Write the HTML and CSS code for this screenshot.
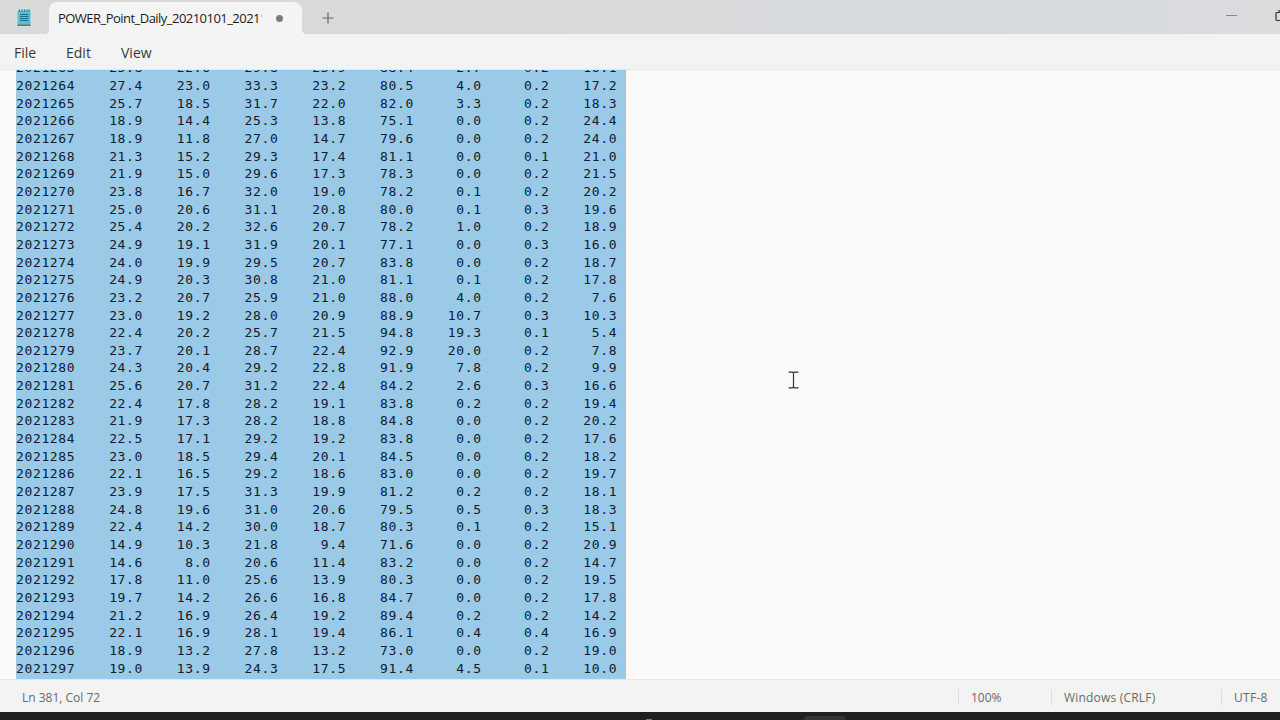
FILE: index.html
```html
<!DOCTYPE html>
<html lang="en">
<head>
  <meta charset="UTF-8" />
  <title>Notepad</title>
  <link rel="stylesheet" href="styles.css">
</head>
<body>
  <div class="window">
    <div class="titlebar">
      <svg class="app-icon" width="14" height="18" viewBox="0 0 14 18">
        <rect x="0.5" y="15" width="13" height="2" fill="#8d6a42"/>
        <rect x="0.5" y="1.500" width="13" height="14" rx="1" fill="#4fc4d9"/>
        <path d="M2.500 .5v2M5 .5v2M7.500 .5v2M10 .5v2M12 .5v2" stroke="#2a6b7c" stroke-width="1"/>
        <path d="M3 5.500h8.500M3 7.500h8.500M3 9.500h8.500M3 11.500h8.500" stroke="#1c7287" stroke-width="1"/>
      </svg>
      <div class="tab">
        <span class="tab-title">POWER_Point_Daily_20210101_20211231</span>
        <span class="unsaved"></span>
      </div>
      <svg class="new-tab" width="12" height="12" viewBox="0 0 12 12">
        <path d="M6 .5v11M.5 6h11" stroke="#666" stroke-width="1.200"/>
      </svg>
      <div class="controls">
        <span class="minimize"></span>
        <svg class="restore" width="5" height="12" viewBox="0 0 5 12">
          <path d="M5 2.500H2Q1 2.500 1 3.500V9.500Q1 10.500 2 10.500H5M3 .8H5" fill="none" stroke="#333" stroke-width="1.200"/>
        </svg>
      </div>
    </div>

    <div class="menubar">
      <span class="file">File</span>
      <span class="edit">Edit</span>
      <span class="view">View</span>
    </div>

    <div class="editor">
<pre class="selection">
2021263    25.8    22.6    29.8    23.9    88.4     2.7     0.2    16.1
2021264    27.4    23.0    33.3    23.2    80.5     4.0     0.2    17.2
2021265    25.7    18.5    31.7    22.0    82.0     3.3     0.2    18.3
2021266    18.9    14.4    25.3    13.8    75.1     0.0     0.2    24.4
2021267    18.9    11.8    27.0    14.7    79.6     0.0     0.2    24.0
2021268    21.3    15.2    29.3    17.4    81.1     0.0     0.1    21.0
2021269    21.9    15.0    29.6    17.3    78.3     0.0     0.2    21.5
2021270    23.8    16.7    32.0    19.0    78.2     0.1     0.2    20.2
2021271    25.0    20.6    31.1    20.8    80.0     0.1     0.3    19.6
2021272    25.4    20.2    32.6    20.7    78.2     1.0     0.2    18.9
2021273    24.9    19.1    31.9    20.1    77.1     0.0     0.3    16.0
2021274    24.0    19.9    29.5    20.7    83.8     0.0     0.2    18.7
2021275    24.9    20.3    30.8    21.0    81.1     0.1     0.2    17.8
2021276    23.2    20.7    25.9    21.0    88.0     4.0     0.2     7.6
2021277    23.0    19.2    28.0    20.9    88.9    10.7     0.3    10.3
2021278    22.4    20.2    25.7    21.5    94.8    19.3     0.1     5.4
2021279    23.7    20.1    28.7    22.4    92.9    20.0     0.2     7.8
2021280    24.3    20.4    29.2    22.8    91.9     7.8     0.2     9.9
2021281    25.6    20.7    31.2    22.4    84.2     2.6     0.3    16.6
2021282    22.4    17.8    28.2    19.1    83.8     0.2     0.2    19.4
2021283    21.9    17.3    28.2    18.8    84.8     0.0     0.2    20.2
2021284    22.5    17.1    29.2    19.2    83.8     0.0     0.2    17.6
2021285    23.0    18.5    29.4    20.1    84.5     0.0     0.2    18.2
2021286    22.1    16.5    29.2    18.6    83.0     0.0     0.2    19.7
2021287    23.9    17.5    31.3    19.9    81.2     0.2     0.2    18.1
2021288    24.8    19.6    31.0    20.6    79.5     0.5     0.3    18.3
2021289    22.4    14.2    30.0    18.7    80.3     0.1     0.2    15.1
2021290    14.9    10.3    21.8     9.4    71.6     0.0     0.2    20.9
2021291    14.6     8.0    20.6    11.4    83.2     0.0     0.2    14.7
2021292    17.8    11.0    25.6    13.9    80.3     0.0     0.2    19.5
2021293    19.7    14.2    26.6    16.8    84.7     0.0     0.2    17.8
2021294    21.2    16.9    26.4    19.2    89.4     0.2     0.2    14.2
2021295    22.1    16.9    28.1    19.4    86.1     0.4     0.4    16.9
2021296    18.9    13.2    27.8    13.2    73.0     0.0     0.2    19.0
2021297    19.0    13.9    24.3    17.5    91.4     4.5     0.1    10.0
</pre>
      <svg class="cursor" width="11" height="18" viewBox="0 0 11 18">
        <path d="M.5 1.200h4L5.500 2l1-.8h4M.5 16.800h4l1-.8 1 .8h4M5.500 2v14" fill="none" stroke="#333" stroke-width="1.200"/>
      </svg>
    </div>

    <div class="statusbar">
      <span class="position">Ln 381, Col 72</span>
      <span class="cell zoom">100%</span>
      <span class="cell eol">Windows (CRLF)</span>
      <span class="cell encoding">UTF-8</span>
    </div>
  </div>
  <div class="taskbar">
    <span class="taskbar-icon"></span>
    <span class="taskbar-app"></span>
  </div>
</body>
</html>
```
FILE: styles.css
```css
html, body {
  margin: 0;
  padding: 0;
  height: 100vh;
  overflow: hidden;
}
body {
  display: flex;
  flex-direction: column;
  background-color: #202020;
  font-family: 'Open Sans', 'Noto Sans', sans-serif;
  color: #3a3a3a;
}
.window {
  height: 712px;
  display: flex;
  flex-direction: column;
  background-color: #f3f3f3;
}
.titlebar {
  height: 34px;
  display: flex;
  align-items: center;
  background: linear-gradient(90deg, #d9d9d9 0, #d9d9d9 30%, #d6dadd 75%, #dadcde 100%);
}
.app-icon {
  margin-left: 17px;
  margin-top: 2px;
}
.tab {
  position: relative;
  width: 253px;
  height: 32px;
  margin-left: 18px;
  margin-top: 2px;
  box-sizing: border-box;
  padding-left: 9px;
  display: flex;
  align-items: center;
  border-radius: 8px 8px 0 0;
  background-color: #f4f4f4;
}
/* flared bottom corners of the active tab */
.tab::before,
.tab::after {
  content: '';
  position: absolute;
  bottom: 0;
  width: 4px;
  height: 4px;
}
.tab::before {
  left: -4px;
  background: radial-gradient(circle at 0 0, transparent 4px, #f4f4f4 4px);
}
.tab::after {
  right: -4px;
  background: radial-gradient(circle at 100% 0, transparent 4px, #f4f4f4 4px);
}
.tab-title {
  width: 204px;
  overflow: hidden;
  white-space: nowrap;
  font-size: 13px;
  letter-spacing: -0.53px;
  color: #1c1c1c;
}
.unsaved {
  width: 7px;
  height: 7px;
  margin-left: 14px;
  border-radius: 50%;
  background-color: #7b7b7b;
}
.new-tab {
  margin-left: 20px;
  margin-top: 2px;
}
.controls {
  margin-left: auto;
  display: flex;
  align-items: center;
}
.minimize {
  width: 11px;
  height: 1px;
  margin-right: 38px;
  margin-top: -4px;
  background-color: #888;
}
.restore {
  margin-top: -3px;
}
.menubar {
  height: 34px;
  padding-top: 1px;
  display: flex;
  align-items: center;
  border-bottom: 1px solid #e8e8e8;
  font-size: 14px;
}
.file {
  width: 52px;
  margin-left: 14px;
}
.edit {
  width: 55px;
}
.editor {
  position: relative;
  flex: 1;
  min-height: 0;
  padding-left: 16px;
  overflow: hidden;
  background-color: #f9f9f9;
}
.selection {
  width: 610px;
  margin: -10.7px 0 0;
  padding-bottom: 4px;
  background-color: #9bc9e8;
  color: #0b2030;
  font-family: 'DejaVu Sans Mono', monospace;
  font-size: 13px;
  line-height: 17.66px;
  letter-spacing: 0.64px;
}
.cursor {
  position: absolute;
  left: 788px;
  top: 301px;
}
.statusbar {
  height: 30px;
  padding-top: 2px;
  display: flex;
  align-items: center;
  border-top: 1px solid #e6e6e6;
  font-size: 12px;
  color: #6a6a6a;
}
.position {
  width: 936px;
  margin-left: 22px;
}
.cell {
  box-sizing: border-box;
  height: 16px;
  line-height: 17px;
  padding-left: 12px;
  border-left: 1px solid #dedede;
  white-space: nowrap;
}
.zoom {
  width: 93px;
}
.eol {
  width: 170px;
  letter-spacing: 0.2px;
}
.encoding {
  letter-spacing: 0.3px;
}
.taskbar {
  height: 8px;
  display: flex;
  align-items: flex-end;
  background-color: #202020;
}
.taskbar-icon {
  width: 6px;
  height: 1px;
  margin-left: 646px;
  background-color: #777;
}
.taskbar-app {
  width: 42px;
  height: 4px;
  margin-left: 152px;
  border-radius: 4px 4px 0 0;
  background-color: #343434;
}
```
